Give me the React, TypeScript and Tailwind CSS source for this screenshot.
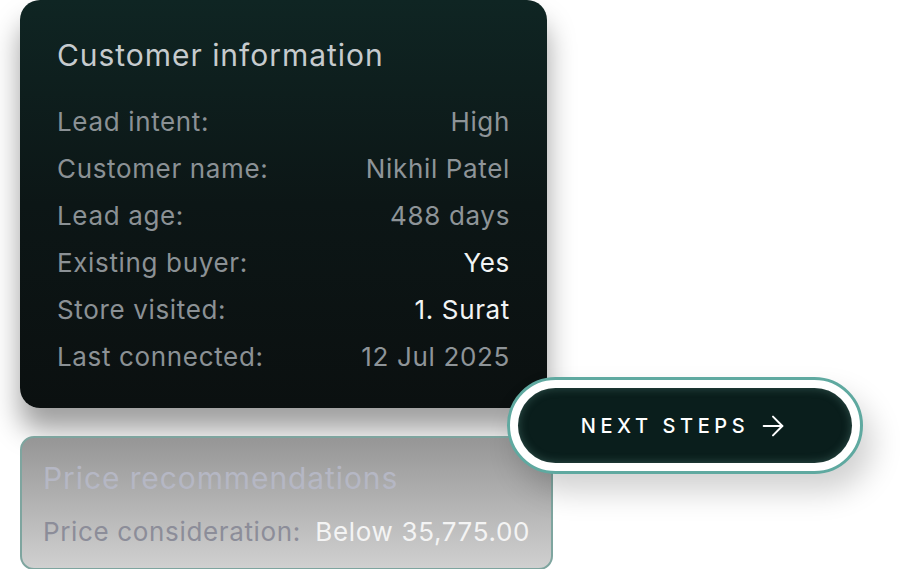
import { ArrowRight } from 'lucide-react';

const rows = [
  { label: 'Lead intent:', value: 'High', bright: false },
  { label: 'Customer name:', value: 'Nikhil Patel', bright: false },
  { label: 'Lead age:', value: '488 days', bright: false },
  { label: 'Existing buyer:', value: 'Yes', bright: true },
  { label: 'Store visited:', value: '1. Surat', bright: true },
  { label: 'Last connected:', value: '12 Jul 2025', bright: false },
];

export default function App() {
  return (
    <div
      className="relative w-[900px] h-[569px] overflow-hidden bg-white"
      style={{ fontFamily: 'Inter, "Noto Sans", sans-serif' }}
    >
      <div className="flex flex-col gap-[28px] pl-[20px]">
        {/* Customer information card */}
        <div className="w-[527px] h-[408px] rounded-[20px] bg-gradient-to-b from-[#0f2523] via-[#0c1616] to-[#0b1010] px-[37px] pt-[36px] shadow-[0_22px_28px_rgba(0,0,0,0.38)]">
          <h2 className="text-[30px] leading-[38px] text-[#c6cbce] tracking-[0.032em]">Customer information</h2>
          <div className="mt-[24px] flex flex-col">
            {rows.map(row => (
              <div key={row.label} className="flex items-center justify-between h-[47px] text-[26px] tracking-[0.025em]">
                <span className="text-[#8b9195]">{row.label}</span>
                <span className={row.bright ? 'text-[#f2f4f4]' : 'text-[#8e9498]'}>{row.value}</span>
              </div>
            ))}
          </div>
        </div>

        {/* Price recommendations card */}
        <div className="w-[533px] h-[134px] rounded-[14px] border-2 border-[#7ea59f] bg-gradient-to-b from-[#969696] to-[#d0d0d0] px-[21px] pt-[21px]">
          <h3 className="text-[30px] leading-[38px] text-[#b5b7c4] tracking-[0.03em]">Price recommendations</h3>
          <div className="mt-[18px] flex items-center justify-between text-[26px] leading-[34px] tracking-[0.025em]">
            <span className="text-[#8c8d99]">Price consideration:</span>
            <span className="text-[#f4f4f4]">Below 35,775.00</span>
          </div>
        </div>
      </div>

      {/* Next steps button */}
      <div className="absolute left-[507px] top-[377px] w-[356px] h-[97px] rounded-full border-[3px] border-[#5fa9a0] bg-white p-[8px] shadow-[10px_18px_30px_rgba(0,0,0,0.18)]">
        <button className="w-full h-full rounded-full bg-[#0a1e1c] shadow-[inset_0_0_10px_rgba(120,180,170,0.35)] flex items-center justify-center gap-[8px] text-white">
          <span className="text-[20px] font-medium tracking-[0.23em]">NEXT STEPS</span>
          <ArrowRight className="w-[32px] h-[32px]" strokeWidth={1.5} />
        </button>
      </div>
    </div>
  );
}
